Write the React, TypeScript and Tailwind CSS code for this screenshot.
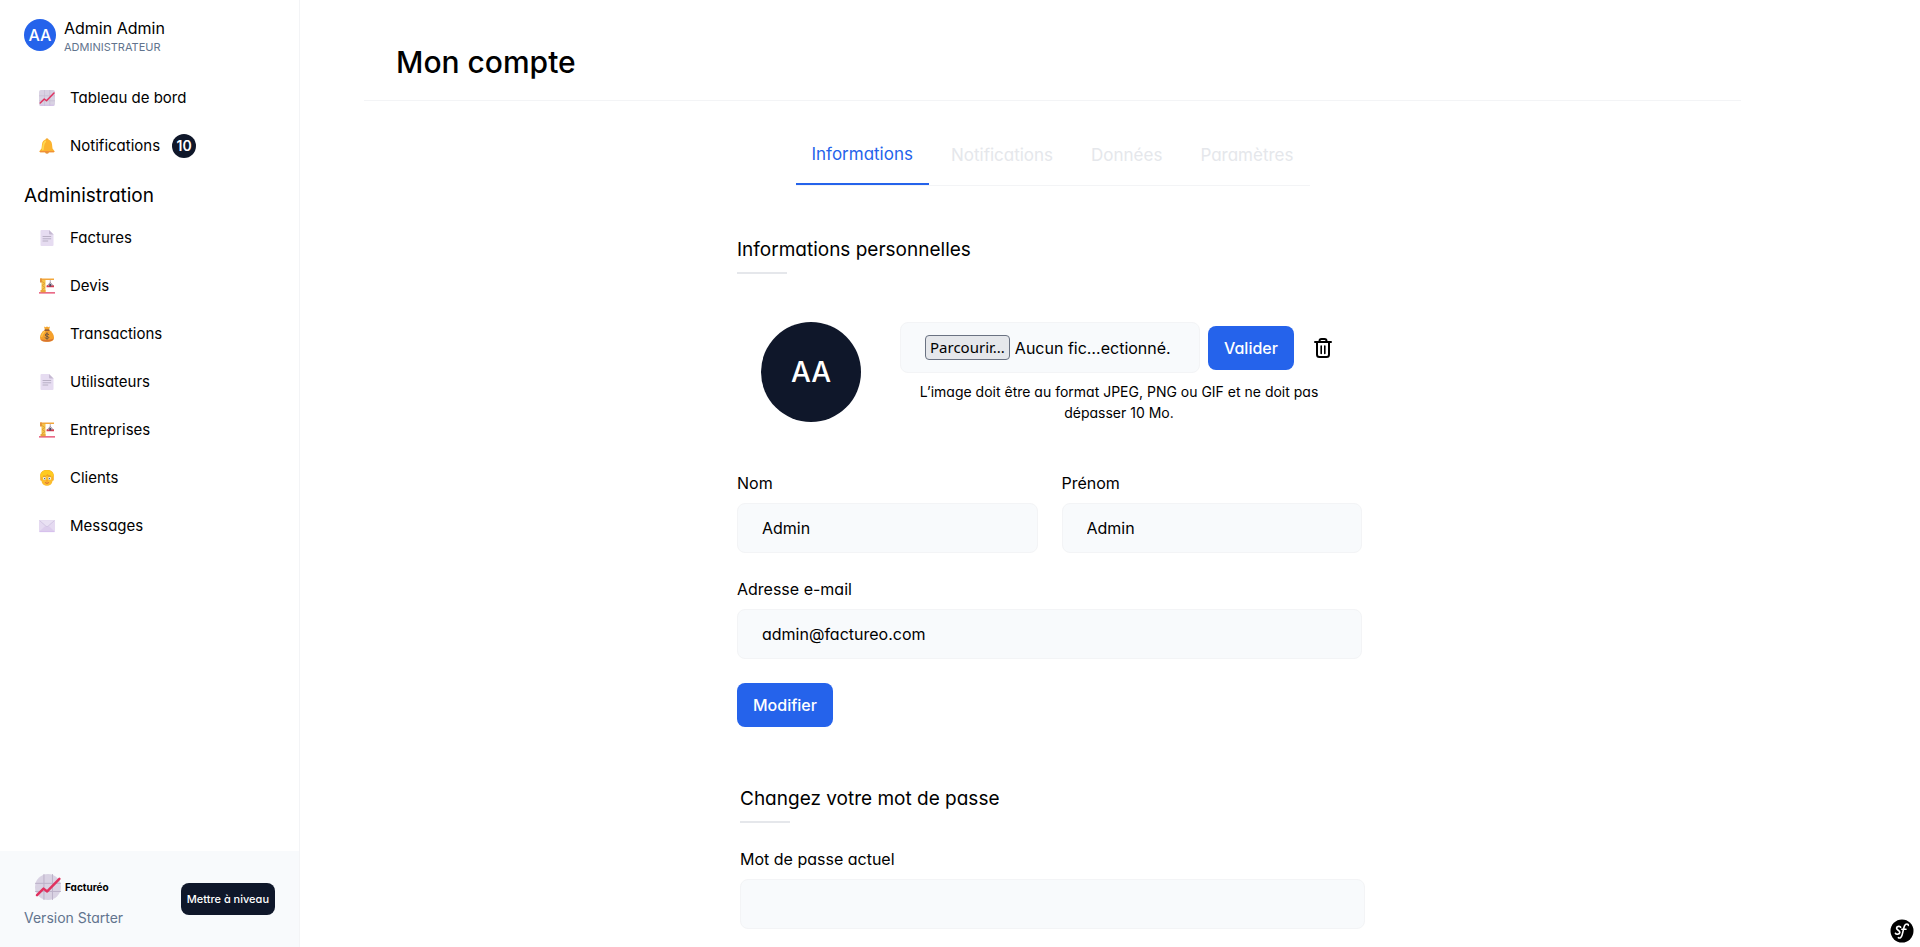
import type { ReactNode } from "react";

function ChartIcon({ className, round = false }: { className: string; round?: boolean }) {
  return (
    <svg viewBox="0 0 32 32" className={className} aria-hidden="true">
      <rect width="32" height="32" rx={round ? 16 : 4} fill="#d9d2e3" />
      <path d="M0 11.5h32M0 21.5h32M11 0v32M21.5 0v32" stroke={round ? "#b5aac2" : "#bfb5cc"} strokeWidth="1.2" opacity="0.8" />
      <path d="M3 30.5h26" stroke="#d3b7ec" strokeWidth="3" strokeLinecap="round" opacity={round ? 0 : 0.5} />
      <path d="M2.5 26 10.5 18l4.5 3.5L30 6" fill="none" stroke="#e0315f" strokeWidth="3" strokeLinecap="round" strokeLinejoin="round" />
    </svg>
  );
}

function BellIcon() {
  return (
    <svg viewBox="0 0 32 32" className="size-4" aria-hidden="true">
      <circle cx="16" cy="27.5" r="4" fill="#e08a35" />
      <circle cx="16" cy="3.5" r="3" fill="#f2a42c" />
      <path d="M16 3C10 3 6.500 7 6 12.500L5 21l-3.500 4.500c-1 1.200-.5 3 1.200 3h26.600c1.700 0 2.200-1.800 1.200-3L27 21l-1-8.500C25.500 7 22 3 16 3Z" fill="#fbb32f" />
      <path d="M12.500 7c-3 2-3.500 5-4 9l-.8 7" fill="none" stroke="#ffd84f" strokeWidth="3.500" strokeLinecap="round" />
      <path d="M2.500 27h27" stroke="#f08f3a" strokeWidth="2.500" strokeLinecap="round" />
    </svg>
  );
}

function PageIcon() {
  return (
    <svg viewBox="0 0 32 32" className="size-4" aria-hidden="true">
      <path d="M5 0h15l9 9v21a2 2 0 0 1-2 2H5a2 2 0 0 1-2-2V2a2 2 0 0 1 2-2Z" fill="#e6dcf1" />
      <path d="M20 0v7a2 2 0 0 0 2 2h7Z" fill="#c5b9d2" />
      <path d="M8 13h15.500M8 17.500h15.500M8 22h9.500" stroke="#b3aabf" strokeWidth="1.800" strokeLinecap="round" />
    </svg>
  );
}

function CraneIcon() {
  return (
    <svg viewBox="0 0 32 32" className="size-4" aria-hidden="true">
      <path d="M5 3h8v26H5z" fill="#f6c445" />
      <path d="m6 7 6 4-6 4 6 4-6 4 6 4" fill="none" stroke="#d08f3c" strokeWidth="1.300" />
      <path d="M2 1h28v3H2z" fill="#f2a63b" />
      <path d="M2 1h4v8H2z" fill="#e4943b" />
      <path d="M22.500 4v6" stroke="#9b8a9c" strokeWidth="1.500" />
      <path d="m22.500 9 6.500 7H16Z" fill="none" stroke="#8a6f86" strokeWidth="1.500" />
      <path d="M15 15h15v3.500H15z" fill="#d63c50" />
      <path d="M20.500 11.500h4v5.500h-4z" fill="#4d4a63" />
      <path d="M0 28.500h32V31H0z" fill="#e23a61" />
      <path d="M3 24h10v4.500H3z" fill="#e9a83d" />
    </svg>
  );
}

function MoneyBagIcon() {
  return (
    <svg viewBox="0 0 32 32" className="size-4" aria-hidden="true">
      <path d="m10 1 3 1.500L16 1l3 1.500L22 1l-2 7h-8Z" fill="#f5a52c" />
      <path d="M12 7.500C6 11 2 17 2 23c0 6 4.500 8.500 14 8.500S30 29 30 23c0-6-4-12-10-15.500Z" fill="#f5a02c" />
      <path d="M3 26c2 4 6 5.500 13 5.500S28 30 29.500 25c-4 3-22 4-26.500 1Z" fill="#d87532" />
      <path d="M11 11c-3 3-5 6-5.500 10" fill="none" stroke="#ffc848" strokeWidth="2.500" strokeLinecap="round" />
      <path d="M12 8h8" stroke="#7a4a34" strokeWidth="2.500" strokeLinecap="round" />
      <path d="M19.500 17c-1.500-2-7-2-7 1 0 3.500 7 2 7 5 0 3-6 3-7.500.5M16 13.500v13" fill="none" stroke="#6d5540" strokeWidth="1.900" strokeLinecap="round" />
    </svg>
  );
}

function PersonIcon() {
  return (
    <svg viewBox="0 0 32 32" className="size-4" aria-hidden="true">
      <path d="M16 0C8 0 2.500 4 2.500 11v8c0 1.500 1 2.500 2.500 2.500h22c1.500 0 2.500-1 2.500-2.500v-8C29.500 4 24 0 16 0Z" fill="#f4a522" />
      <path d="M5 12v9c0 6 4.500 10.500 11 10.500S27 27 27 21v-9Z" fill="#fbbd2e" />
      <path d="M2.500 14C2.500 4 8.500.5 16 .5S29.500 4 29.500 13c-6 0-10-2-12.500-5-3 4-8 6-14.500 6Z" fill="#ffcb20" />
      <circle cx="10.800" cy="17" r="2.800" fill="#fff" />
      <circle cx="21.200" cy="17" r="2.800" fill="#fff" />
      <circle cx="11.200" cy="17.200" r="1.600" fill="#5b6f88" />
      <circle cx="20.800" cy="17.200" r="1.600" fill="#5b6f88" />
      <path d="M8 13c1.500-1 3.500-1 5 0M19 13c1.500-1 3.500-1 5 0" fill="none" stroke="#c8832a" strokeWidth="1.400" />
      <path d="M14.500 21.500c1 .8 2 .8 3 0" fill="none" stroke="#ee7a26" strokeWidth="1.500" />
      <path d="M13 25.500c2 1.500 4 1.500 6 0" fill="none" stroke="#d0553a" strokeWidth="1.800" strokeLinecap="round" />
    </svg>
  );
}

function EnvelopeIcon() {
  return (
    <svg viewBox="0 0 32 32" className="size-4" aria-hidden="true">
      <rect y="4" width="32" height="24" rx="2" fill="#e5daf1" />
      <path d="m1 26.500 11-10h8l11 10Z" fill="#dccdec" />
      <path d="m1 5 12.500 11c1.500 1.300 3.500 1.300 5 0L31 5" fill="#e9e1f3" stroke="#c8b9da" strokeWidth="1.300" />
      <path d="M1 27.300h30" stroke="#d2b5ee" strokeWidth="1.500" />
    </svg>
  );
}

function TrashIcon() {
  return (
    <svg viewBox="0 0 18 20" className="h-5 w-[18px]" fill="none" stroke="#000" strokeWidth="2" strokeLinecap="round" strokeLinejoin="round" aria-hidden="true">
      <path d="M1 4h16" />
      <path d="M5.500 4V3a2 2 0 0 1 2-2h3a2 2 0 0 1 2 2v1" />
      <path d="M3 4v12.500A2.500 2.500 0 0 0 5.500 19h7a2.500 2.500 0 0 0 2.500-2.500V4" />
      <path d="M7.200 8v7.500M10.800 8v7.500" strokeWidth="1.600" />
    </svg>
  );
}

function SymfonyIcon() {
  return (
    <svg viewBox="0 0 24 24" className="size-6" aria-hidden="true">
      <circle cx="12" cy="12" r="11.500" fill="#000" />
      <path d="M10.600 8.200c-.3-1.200-3.900-1.300-4 .9-.1 2.200 3.400 2 3.200 4.300-.2 2.100-3.600 2.400-4.300.9" fill="none" stroke="#fff" strokeWidth="1.700" strokeLinecap="round" />
      <path d="M18.300 6.400c.2-1.700-2.600-2-3.700.3-1.200 2.600-1.500 6.200-2.500 9.300-.7 2.300-2 3.500-3.700 2.700M11.800 10.300h4.200" fill="none" stroke="#fff" strokeWidth="1.600" strokeLinecap="round" />
    </svg>
  );
}

function NavItem({ icon, label, badge }: { icon: ReactNode; label: string; badge?: string }) {
  return (
    <li>
      <a href="#" className="flex h-12 items-center pl-[15px]">
        {icon}
        <span className="ml-[15px]">{label}</span>
        {badge && (
          <span className="ml-3 flex size-6 items-center justify-center rounded-full bg-[#0f172a] text-sm font-semibold text-white">
            {badge}
          </span>
        )}
      </a>
    </li>
  );
}

function SectionTitle({ children }: { children: ReactNode }) {
  return (
    <h2 className="text-[19px] leading-7">
      {children}
      <span className="mt-2 block h-0.5 w-[50px] bg-gray-200" />
    </h2>
  );
}

function Field({ id, label, type = "text", value }: { id: string; label: string; type?: string; value?: string }) {
  return (
    <div className="min-w-0 flex-1">
      <label htmlFor={id} className="block leading-6">
        {label}
      </label>
      <input
        id={id}
        type={type}
        defaultValue={value}
        className="mt-2 block h-[50px] w-full rounded-lg border border-gray-100 bg-slate-50 px-6"
      />
    </div>
  );
}

const adminLinks = [
  { label: "Factures", icon: <PageIcon /> },
  { label: "Devis", icon: <CraneIcon /> },
  { label: "Transactions", icon: <MoneyBagIcon /> },
  { label: "Utilisateurs", icon: <PageIcon /> },
  { label: "Entreprises", icon: <CraneIcon /> },
  { label: "Clients", icon: <PersonIcon /> },
  { label: "Messages", icon: <EnvelopeIcon /> },
];

function Sidebar() {
  return (
    <aside className="sticky top-0 flex h-screen w-[300px] shrink-0 flex-col border-r border-gray-100">
      <div className="flex items-center gap-2 px-6 pt-4">
        <div className="flex size-8 items-center justify-center rounded-full bg-[#2563eb] font-medium text-white">AA</div>
        <div>
          <p className="leading-6">Admin Admin</p>
          <p className="text-[11px] leading-[14px] text-slate-500">ADMINISTRATEUR</p>
        </div>
      </div>
      <nav className="mt-5 grow px-6 text-[15px]">
        <ul>
          <NavItem icon={<ChartIcon className="size-4" />} label="Tableau de bord" />
          <NavItem icon={<BellIcon />} label="Notifications" badge="10" />
        </ul>
        <h2 className="pt-2.5 pb-0.5 text-[19px] leading-8">Administration</h2>
        <ul>
          {adminLinks.map((link) => (
            <NavItem key={link.label} icon={link.icon} label={link.label} />
          ))}
        </ul>
      </nav>
      <div className="flex h-24 items-center justify-between bg-slate-50 px-6">
        <div className="pt-1">
          <div className="flex items-center gap-1 pl-[11px]">
            <ChartIcon className="size-[26px]" round />
            <span className="text-[10px] font-bold">Facturéo</span>
          </div>
          <p className="mt-2 text-sm leading-5 text-slate-500">Version Starter</p>
        </div>
        <button type="button" className="h-8 rounded-lg bg-[#0f172a] px-1.5 text-[11px] font-medium text-white">
          Mettre à niveau
        </button>
      </div>
    </aside>
  );
}

const otherTabs = ["Notifications", "Données", "Paramètres"];

export default function App() {
  return (
    <div className="flex min-h-screen bg-white font-['Inter','Open_Sans',sans-serif] text-base text-black [font-feature-settings:'cv11']">
      <Sidebar />
      <main className="min-w-0 grow pr-4 pl-16">
        <div className="max-w-[1377px]">
          <header className="border-b border-gray-100 px-8 pt-[42px] pb-[18px]">
            <h1 className="text-3xl leading-10 font-medium">Mon compte</h1>
          </header>

          <div className="mt-7 flex justify-center">
            <nav className="flex gap-1.5 border-b border-gray-100 text-[17px]">
              <a href="#" className="flex h-14 items-center border-b-2 border-[#2563eb] px-4 pb-0.5 text-[#2563eb]">
                Informations
              </a>
              {otherTabs.map((tab) => (
                <a key={tab} href="#" className="flex h-14 items-center px-4 pb-0.5 text-gray-200">
                  {tab}
                </a>
              ))}
            </nav>
          </div>

          <section className="mx-auto mt-[50px] max-w-[631px] pr-1.5">
            <SectionTitle>Informations personnelles</SectionTitle>
            <div className="mt-12 flex gap-[39px] px-6">
              <div className="flex size-[100px] shrink-0 items-center justify-center rounded-full bg-[#0f172a] text-[28px] font-medium text-white">
                AA
              </div>
              <div className="min-w-0 grow">
                <div className="flex items-center gap-2">
                  <label className="flex h-[51px] w-[300px] shrink-0 items-center rounded-lg border border-gray-100 bg-slate-50 px-6">
                    <input type="file" className="sr-only" />
                    <span className="flex h-[25px] items-center rounded border border-gray-500 bg-gray-200 px-1 font-['Noto_Sans','Open_Sans',sans-serif] text-[15px]">
                      Parcourir...
                    </span>
                    <span className="ml-[5px] whitespace-nowrap">Aucun fic…ectionné.</span>
                  </label>
                  <button type="button" className="h-11 rounded-lg bg-[#2563eb] px-4 font-medium text-white">
                    Valider
                  </button>
                  <button type="button" aria-label="Supprimer l’image" className="pl-3">
                    <TrashIcon />
                  </button>
                </div>
                <p className="mt-2 text-center text-sm leading-[21px]">
                  L’image doit être au format JPEG, PNG ou GIF et ne doit pas dépasser 10 Mo.
                </p>
              </div>
            </div>
            <form className="mt-12 flex flex-col gap-6">
              <div className="flex gap-6">
                <Field id="nom" label="Nom" value="Admin" />
                <Field id="prenom" label="Prénom" value="Admin" />
              </div>
              <Field id="email" label="Adresse e-mail" type="email" value="admin@factureo.com" />
              <button type="button" className="h-11 self-start rounded-lg bg-[#2563eb] px-4 font-medium text-white">
                Modifier
              </button>
            </form>
          </section>

          <section className="mx-auto mt-[58px] max-w-[625px] pb-4">
            <SectionTitle>Changez votre mot de passe</SectionTitle>
            <form className="mt-6">
              <Field id="mot-de-passe" label="Mot de passe actuel" type="password" />
            </form>
          </section>
        </div>
      </main>
      <button type="button" aria-label="Symfony" className="fixed right-1.5 bottom-1">
        <SymfonyIcon />
      </button>
    </div>
  );
}
